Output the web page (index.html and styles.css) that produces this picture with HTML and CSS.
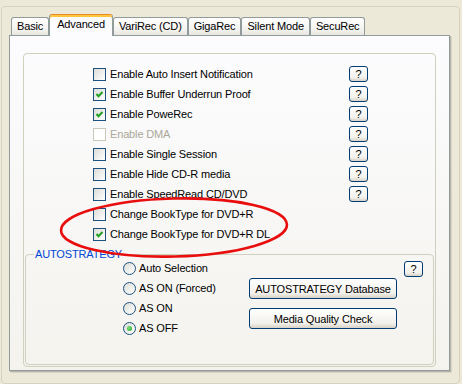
FILE: index.html
```html
<!DOCTYPE html>
<html lang="en">
<head>
    <meta charset="UTF-8">
    <title>Advanced</title>
    <link rel="stylesheet" href="styles.css">
</head>
<body>
    <div class="frame">
        <div class="tabs">
            <div class="tab">Basic</div>
            <div class="tab ativa">Advanced</div>
            <div class="tab">VariRec (CD)</div>
            <div class="tab">GigaRec</div>
            <div class="tab">Silent Mode</div>
            <div class="tab">SecuRec</div>
        </div>
        <div class="pagina">
            <div class="caixa">
                <div class="opcoes">
                    <div class="linha"><span class="check"></span><span>Enable Auto Insert Notification</span><button class="ajuda">?</button></div>
                    <div class="linha"><span class="check on"><svg viewBox="0 0 11 11"><polyline points="2.5,5 4.5,7.2 8.5,3"/></svg></span><span>Enable Buffer Underrun Proof</span><button class="ajuda">?</button></div>
                    <div class="linha"><span class="check on"><svg viewBox="0 0 11 11"><polyline points="2.5,5 4.5,7.2 8.5,3"/></svg></span><span>Enable PoweRec</span><button class="ajuda">?</button></div>
                    <div class="linha off"><span class="check"></span><span>Enable DMA</span><button class="ajuda">?</button></div>
                    <div class="linha"><span class="check"></span><span>Enable Single Session</span><button class="ajuda">?</button></div>
                    <div class="linha"><span class="check"></span><span>Enable Hide CD-R media</span><button class="ajuda">?</button></div>
                    <div class="linha"><span class="check"></span><span>Enable SpeedRead CD/DVD</span><button class="ajuda">?</button></div>
                    <div class="linha"><span class="check"></span><span>Change BookType for DVD+R</span></div>
                    <div class="linha"><span class="check on"><svg viewBox="0 0 11 11"><polyline points="2.5,5 4.5,7.2 8.5,3"/></svg></span><span>Change BookType for DVD+R DL</span></div>
                </div>
                <fieldset class="estrategia">
                    <legend>AUTOSTRATEGY</legend>
                    <div class="radios">
                        <div class="radio"><span class="bola"></span>Auto Selection</div>
                        <div class="radio"><span class="bola"></span>AS ON (Forced)</div>
                        <div class="radio"><span class="bola"></span>AS ON</div>
                        <div class="radio"><span class="bola on"></span>AS OFF</div>
                    </div>
                    <div class="acoes">
                        <button class="botao">AUTOSTRATEGY Database</button>
                        <button class="botao">Media Quality Check</button>
                    </div>
                    <button class="ajuda">?</button>
                </fieldset>
            </div>
        </div>
    </div>

    <!-- marcacao vermelha por cima -->
    <svg class="marca" width="462" height="384">
        <ellipse cx="174" cy="227.5" rx="113" ry="29" transform="rotate(-1.5 174 227.5)"/>
    </svg>
</body>
</html>
```

FILE: styles.css
```css
body {
    background-color: #ece9d8;
    color: black;
    font-family: "Liberation Sans", Arial, sans-serif;
    font-size: 11px;
    letter-spacing: -0.15px;
    margin: 0;
    width: 462px;
    height: 384px;
    position: relative;
    overflow: hidden;
}
.frame {
    box-sizing: border-box;
    height: 378px;
    margin: 6px 2px 0 1px;
    padding: 7px 0 0 7px;
    border: 1px solid #d6d2c2;
    border-radius: 4px;
}
.tabs {
    display: flex;
    align-items: flex-end;
    height: 21px;
    margin-left: 2px;
}
.tab {
    box-sizing: border-box;
    height: 18px;
    padding: 0 5px;
    line-height: 17px;
    border: 1px solid #919b9c;
    border-bottom: none;
    border-radius: 3px 3px 0 0;
    background: linear-gradient(#ffffff, #f3f3ef 70%, #e6e5de);
    white-space: nowrap;
}
.tab.ativa {
    height: 22px;
    margin-bottom: -1px;
    padding: 0 7px;
    line-height: 18px;
    border-top: 1px solid #e68b2c;
    box-shadow: inset 0 2px 0 #ffc73c;
    background: #fcfcfe;
    position: relative;
    z-index: 1;
}
.pagina {
    box-sizing: border-box;
    width: 441px;
    height: 336px;
    padding: 17px 0 0 13px;
    border: 1px solid #919b9c;
    background: linear-gradient(#fcfcfe, #f4f3ee);
    box-shadow: 1px 1px 0 #b8b6aa, 2px 2px 0 #d8d5c6;
}
.caixa {
    box-sizing: border-box;
    width: 413px;
    height: 314px;
    padding: 10px 0 0 0;
    border: 1px solid #d0d0bf;
    border-radius: 4px;
}
.opcoes {
    padding-left: 69px;
}
.linha {
    display: flex;
    align-items: center;
    height: 20px;
    width: 275px;
}
.linha.off {
    color: #aca899;
}
.check {
    box-sizing: border-box;
    width: 13px;
    height: 13px;
    margin-right: 4px;
    border: 1px solid #1c5180;
    background: linear-gradient(135deg, #dcdcd7, #ffffff);
    display: flex;
}
.linha.off .check {
    border-color: #cac8bb;
    background: #ffffff;
}
.check svg {
    width: 11px;
    height: 11px;
}
.check polyline {
    fill: none;
    stroke: #21a121;
    stroke-width: 2;
}
.ajuda {
    box-sizing: border-box;
    width: 19px;
    height: 16px;
    margin-left: auto;
    padding: 0;
    font-family: inherit;
    font-size: 11px;
    line-height: 13px;
    border: 1px solid #003c74;
    border-radius: 3px;
    background: linear-gradient(#ffffff, #f2f1ec 75%, #d8d2c6);
    color: black;
}
.estrategia {
    display: flex;
    align-items: flex-start;
    margin: 4px 1px 1px 1px;
    padding: 0 0 26px 0;
    border: 1px solid #d0d0bf;
    border-radius: 4px;
    min-width: 0;
}
.estrategia legend {
    margin-left: 8px;
    padding: 0 1px;
    color: #0046d5;
    line-height: 13px;
}
.radios {
    width: 126px;
    margin: -3px 0 0 97px;
}
.radio {
    display: flex;
    align-items: center;
    height: 20px;
}
.bola {
    box-sizing: border-box;
    width: 13px;
    height: 13px;
    margin-right: 3px;
    border: 1px solid #1c5180;
    border-radius: 50%;
    background: linear-gradient(135deg, #dcdcd7, #ffffff);
    display: flex;
    align-items: center;
    justify-content: center;
}
.bola.on::after {
    content: "";
    width: 5px;
    height: 5px;
    border-radius: 50%;
    background: radial-gradient(circle at 40% 40%, #7be37b, #21a121);
}
.acoes {
    display: flex;
    flex-direction: column;
    gap: 9px;
    margin: 17px 7px 0 0;
}
.botao {
    box-sizing: border-box;
    width: 148px;
    height: 21px;
    padding: 0;
    font-family: inherit;
    font-size: 11px;
    letter-spacing: -0.15px;
    border: 1px solid #003c74;
    border-radius: 3px;
    background: linear-gradient(#ffffff, #f2f1ec 75%, #d8d2c6);
    color: black;
}
.estrategia .ajuda {
    margin-left: 0;
}
.marca {
    position: absolute;
    left: 0;
    top: 0;
    pointer-events: none;
}
.marca ellipse {
    fill: none;
    stroke: #e80e0e;
    stroke-width: 2.6;
}
```
